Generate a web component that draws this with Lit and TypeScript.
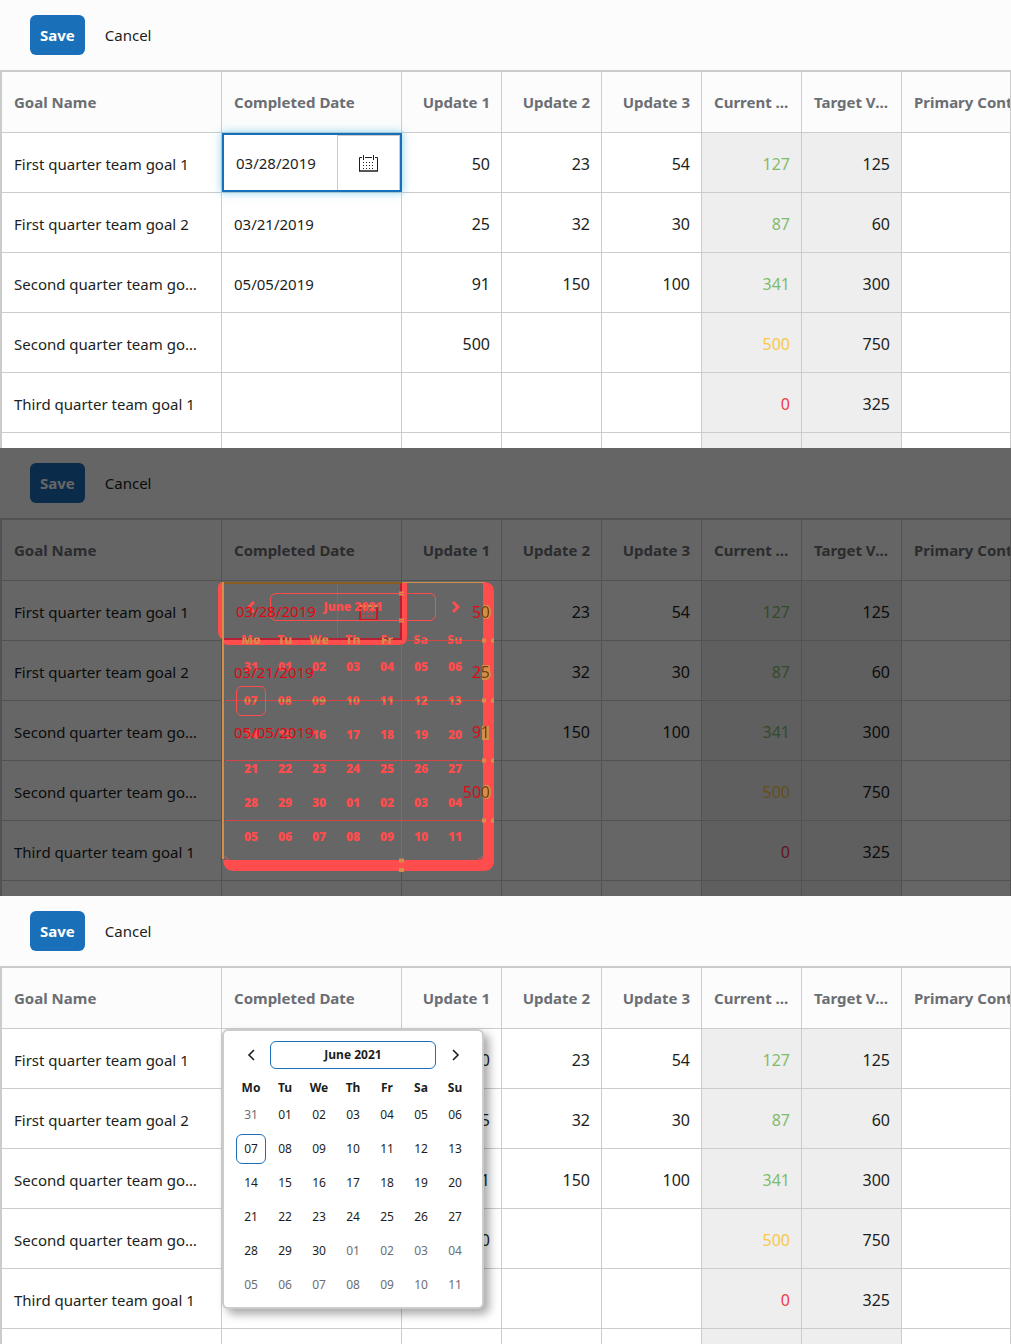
import { LitElement, html, css, nothing } from "lit";
import { customElement, property } from "lit/decorators.js";
import { classMap } from "lit/directives/class-map.js";

type Mode = "edit" | "diff" | "picker";

interface Goal {
  name: string;
  date: string;
  updates: [string, string, string];
  current: string;
  tone: "good" | "warn" | "bad";
  target: string;
}

const GOALS: Goal[] = [
  { name: "First quarter team goal 1", date: "03/28/2019", updates: ["50", "23", "54"], current: "127", tone: "good", target: "125" },
  { name: "First quarter team goal 2", date: "03/21/2019", updates: ["25", "32", "30"], current: "87", tone: "good", target: "60" },
  { name: "Second quarter team goal 1", date: "05/05/2019", updates: ["91", "150", "100"], current: "341", tone: "good", target: "300" },
  { name: "Second quarter team goal 2", date: "", updates: ["500", "", ""], current: "500", tone: "warn", target: "750" },
  { name: "Third quarter team goal 1", date: "", updates: ["", "", ""], current: "0", tone: "bad", target: "325" },
];

const DAY_NAMES = ["Mo", "Tu", "We", "Th", "Fr", "Sa", "Su"];

// Six weeks starting on Monday 31 May 2021.
const WEEKS = Array.from({ length: 6 }, (_, w) =>
  Array.from({ length: 7 }, (_, d) => new Date(Date.UTC(2021, 4, 31 + w * 7 + d)))
);

@customElement("month-picker")
export class MonthPicker extends LitElement {
  @property({ type: Boolean, reflect: true }) marked = false;

  static styles = css`
    :host {
      display: block;
      box-sizing: border-box;
      width: 262px;
      padding: 10px 10px 5px;
      border: 2px solid #ccc;
      border-radius: 6px;
      background: #fff;
      color: #1c1e21;
      box-shadow: 5px 5px 10px rgba(0, 0, 0, 0.35);
      font: 12px/20px "Noto Sans", sans-serif;
    }
    :host([marked]) {
      background: none;
      border-color: transparent;
      box-shadow: none;
      color: #ff4d4d;
      font-weight: 900;
    }
    .head {
      display: flex;
      align-items: center;
      justify-content: space-between;
      margin-bottom: 9px;
    }
    button {
      box-sizing: border-box;
      margin: 0;
      padding: 0;
      border: 0;
      background: none;
      color: inherit;
      font: inherit;
    }
    .step {
      display: grid;
      place-items: center;
      width: 33px;
      height: 28px;
    }
    .step svg {
      fill: none;
      stroke: currentColor;
      stroke-width: 1.6;
    }
    :host([marked]) .step svg {
      stroke-width: 3;
    }
    .title {
      flex: 1;
      margin: 0 3px;
      height: 28px;
      border: 1px solid #1a6fb9;
      border-radius: 6px;
      font-weight: 700;
    }
    table {
      width: 100%;
      border-collapse: collapse;
      table-layout: fixed;
    }
    th,
    td {
      padding: 0;
      text-align: center;
    }
    th {
      height: 20px;
      font-weight: 700;
    }
    td {
      height: 34px;
      line-height: 0;
    }
    .day {
      width: 30px;
      height: 30px;
      border: 1px solid transparent;
      border-radius: 6px;
      line-height: 20px;
      vertical-align: middle;
    }
    .outside {
      color: #6b6e73;
    }
    .today {
      border-color: #1a6fb9;
    }
    :host([marked]) .title,
    :host([marked]) .today {
      border-color: #ff4d4d;
    }
    :host([marked]) .outside {
      color: inherit;
    }
    :host([marked]) th,
    :host([marked]) .title {
      font-weight: 900;
    }
    /* Two-tone glyphs where the calendar crosses a line of the grid. */
    :host([marked]) th span,
    :host([marked]) .crossed span {
      color: transparent;
      -webkit-background-clip: text;
      background-clip: text;
    }
    :host([marked]) th span {
      background-image: linear-gradient(#ff4d4d 40%, #d0904a 40%);
    }
    :host([marked]) th:nth-child(n + 6) span {
      background-image: linear-gradient(#ff4d4d 45%, #d0904a 45% 55%, #ff4d4d 55%);
    }
    :host([marked]) .crossed span {
      background-image: linear-gradient(#ff4d4d 42%, #d0904a 42% 58%, #ff4d4d 58%);
    }
  `;

  render() {
    return html`
      <div class="head">
        <button class="step" aria-label="Previous month">
          <svg width="8" height="12" viewBox="0 0 8 12"><path d="M7 1 2 6l5 5" /></svg>
        </button>
        <button class="title">June 2021</button>
        <button class="step" aria-label="Next month">
          <svg width="8" height="12" viewBox="0 0 8 12"><path d="m1 1 5 5-5 5" /></svg>
        </button>
      </div>
      <table>
        <thead>
          <tr>${DAY_NAMES.map((d) => html`<th scope="col"><span>${d}</span></th>`)}</tr>
        </thead>
        <tbody>
          ${WEEKS.map(
            (week, w) => html`<tr class=${w === 1 ? "crossed" : ""}>
              ${week.map((day) => {
                const n = day.getUTCDate();
                const inMonth = day.getUTCMonth() === 5;
                return html`<td>
                  <button class=${classMap({ day: true, outside: !inMonth, today: inMonth && n === 7 })}><span>${String(n).padStart(2, "0")}</span></button>
                </td>`;
              })}
            </tr>`
          )}
        </tbody>
      </table>
    `;
  }
}

@customElement("goal-grid")
export class GoalGrid extends LitElement {
  @property({ reflect: true }) mode: Mode = "edit";

  static styles = css`
    :host {
      display: block;
      position: relative;
      overflow: hidden;
      background: #fff;
      color: #1c1e21;
      font: 15px/24px "Noto Sans", sans-serif;
    }
    .toolbar {
      display: flex;
      gap: 10px;
      padding: 15px 30px;
      background: #fcfcfc;
    }
    button {
      margin: 0;
      padding: 0 10px;
      height: 40px;
      border: 0;
      border-radius: 6px;
      background: none;
      color: inherit;
      font: inherit;
    }
    .save {
      background: #1a6fb9;
      color: #fff;
      font-weight: 700;
    }
    .grid {
      width: 100%;
      border-collapse: separate;
      border-spacing: 0;
      table-layout: fixed;
      border-top: 2px solid #ccc;
      border-left: 2px solid #ccc;
    }
    .c-name { width: 220px; }
    .c-date { width: 180px; }
    .c-num { width: 100px; }
    th,
    td {
      box-sizing: border-box;
      height: 60px;
      padding: 2px 11px 0 12px;
      border-right: 1px solid #ccc;
      border-bottom: 1px solid #ccc;
      text-align: left;
      white-space: nowrap;
      overflow: hidden;
      text-overflow: ellipsis;
    }
    th {
      height: 61px;
      padding-top: 0;
      background: #fcfcfc;
      color: #6b6e73;
      font-weight: 700;
    }
    .name { padding-right: 16px; }
    .clip { text-overflow: clip; padding-right: 0; }
    .num { text-align: right; }
    td.num { font-size: 16px; }
    .fixed { background: #eee; }
    .good { color: #7fbc6d; }
    .warn { color: #fbc748; }
    .bad { color: #f2384a; }
    .tail td {
      height: 15px;
      padding: 0;
      border-bottom: 0;
    }
    .host-cell {
      position: relative;
      overflow: visible;
      padding: 0 0 0 14px;
    }
    .editor {
      position: absolute;
      inset: 0 -1px 0 0;
      box-sizing: border-box;
      display: flex;
      border: 2px solid #1a6fb9;
      background: #fff;
      box-shadow: 0 0 8px 1px rgba(80, 190, 235, 0.6);
    }
    .editor input {
      flex: 1;
      min-width: 0;
      padding: 0 0 0 12px;
      border: 0;
      background: none;
      color: inherit;
      font: inherit;
      outline: 0;
    }
    .editor button {
      display: grid;
      place-items: center;
      width: 63px;
      height: auto;
      border: 1px solid #ccc;
      border-width: 1px 1px 0 1px;
      border-radius: 0;
      padding: 0;
    }
    month-picker {
      position: absolute;
      top: 0;
      left: 0;
      z-index: 3;
    }
    .shade {
      position: absolute;
      inset: 0;
      background: rgba(0, 0, 0, 0.6);
      z-index: 1;
    }
    .changed {
      position: relative;
      z-index: 4;
      color: #e00810;
    }
    .num .changed {
      color: transparent;
      background: linear-gradient(to left, #7a3a10 8px, #e00810 8px);
      -webkit-background-clip: text;
      background-clip: text;
    }
    .marks {
      position: absolute;
      top: -1px;
      left: -5px;
      z-index: 2;
    }
  `;

  private calendarIcon() {
    return html`<svg width="19" height="17" viewBox="0 0 19 17" fill="none" stroke="currentColor">
      <path d="M3 2.500H.5v13.500M18.500 16V2.500H16M6 2.500h7M4.500 0v5M14.500 0v5" />
      <path d="M0 16h19" stroke-width="1.500" />
      <path d="M4 7.500h12M4 10.500h12M4 13.500h12" stroke-dasharray="1 2" />
    </svg>`;
  }

  /** Shapes that differ between the two states; the view box starts at the field's outer corner. */
  private marks() {
    return html`<svg class="marks" width="280" height="294" viewBox="217 132 280 294" fill="none">
      <!-- popup shadow -->
      <path fill="#ff4d4d" d="M481 134h4q9 1 9 10v268q0 11-11 11H233q-9 0-10-11h256q4 0 4-4V137q0-2-2-3Z" />
      <!-- glow of the field -->
      <path fill="#ff4d4d" d="M222 134v57h1v1h179v-58h5v55q0 8-8 8H228q-5 0-6-6-4-2-4-8v-43q0-5 4-6Z" />
      <path stroke="#b52035" stroke-width="2" d="M224 191h178M401 134v58" />
      <!-- grid lines hidden by the popup -->
      <path stroke="#d84444" d="M225 252.500h257M225 312.500h257M225 372.500h257M407 192.500h75M401.500 197v213" />
      <path stroke="#d84444" d="M337.500 190v-54.500H400" />
      <!-- popup's inner outline -->
      <path stroke="#ff4d4d" d="M225 408q1 3 4 3.500M482 408q-1 3-4 3.500M225 137" />
      <!-- overlaps -->
      <path stroke="#8c5c20" stroke-width="2" d="M223 135h178" />
      <path stroke="#d0904a" d="M402 134.500h82" />
      <path stroke="#d0904a" stroke-width="2" d="M223 134v277" />
      <path
        stroke="#d0904a"
        stroke-width="4"
        d="M482 192.500h4M491 192.500h3M482 252.500h4M491 252.500h3M482 312.500h4M491 312.500h3M482 372.500h4M491 372.500h3M399 145.500h5M399 172.500h5M399 412.500h5M399 422h5"
      />
      <path
        fill="#d0904a"
        d="M484 157h4q3 2 3 7t-3 7h-4l-2-3v-8ZM482 217h8v5l1 4q0 4-4 6h-5ZM482 278h7v14h-7ZM484 337h4q3 2 3 7t-3 7h-4l-2-3v-8Z"
      />
      <!-- field's calendar icon -->
      <path stroke="#c81820" stroke-width="2" d="M360 158v14h17v-14Z" />
      <path stroke="#d0904a" stroke-width="2" d="M359 158h19M364 155v6M373 155v6" />
      <path stroke="#d84444" stroke-width="2" stroke-dasharray="2 2" d="M363 164h12M363 168h12" />
    </svg>`;
  }

  private dateCell(goal: Goal, index: number) {
    if (index > 0) {
      return html`<td><span class=${this.mode === "diff" ? "changed" : ""}>${goal.date}</span></td>`;
    }
    if (this.mode === "edit") {
      return html`<td class="host-cell">
        <div class="editor">
          <input aria-label="Completed Date" .value=${goal.date} />
          <button aria-label="Open calendar">${this.calendarIcon()}</button>
        </div>
      </td>`;
    }
    if (this.mode === "picker") {
      return html`<td class="host-cell"><month-picker></month-picker></td>`;
    }
    return html`<td class="host-cell">
      <span class="changed">${goal.date}</span>
      ${this.marks()}
      <month-picker marked></month-picker>
    </td>`;
  }

  render() {
    return html`
      <div class="toolbar">
        <button class="save">Save</button>
        <button>Cancel</button>
      </div>
      <table class="grid">
        <colgroup>
          <col class="c-name" />
          <col class="c-date" />
          <col class="c-num" /><col class="c-num" /><col class="c-num" /><col class="c-num" /><col class="c-num" />
          <col />
        </colgroup>
        <thead>
          <tr>
            <th scope="col">Goal Name</th>
            <th scope="col">Completed Date</th>
            <th scope="col" class="num">Update 1</th>
            <th scope="col" class="num">Update 2</th>
            <th scope="col" class="num">Update 3</th>
            <th scope="col">Current Value</th>
            <th scope="col">Target Value</th>
            <th scope="col" class="clip">Primary Contact</th>
          </tr>
        </thead>
        <tbody>
          ${GOALS.map(
            (g, i) => html`<tr>
              <td class="name">${g.name}</td>
              ${this.dateCell(g, i)}
              ${g.updates.map(
                (u, k) => html`<td class="num"><span class=${this.mode === "diff" && k === 0 ? "changed" : ""}>${u}</span></td>`
              )}
              <td class="num fixed ${g.tone}">${g.current}</td>
              <td class="num fixed">${g.target}</td>
              <td></td>
            </tr>`
          )}
          <tr class="tail">
            <td></td><td></td><td></td><td></td><td></td><td class="fixed"></td><td class="fixed"></td><td></td>
          </tr>
        </tbody>
      </table>
      ${this.mode === "diff" ? html`<div class="shade"></div>` : nothing}
    `;
  }
}

@customElement("app-root")
export class AppRoot extends LitElement {
  static styles = css`
    :host {
      display: block;
    }
  `;

  render() {
    return html`
      <goal-grid mode="edit"></goal-grid>
      <goal-grid mode="diff"></goal-grid>
      <goal-grid mode="picker"></goal-grid>
    `;
  }
}
